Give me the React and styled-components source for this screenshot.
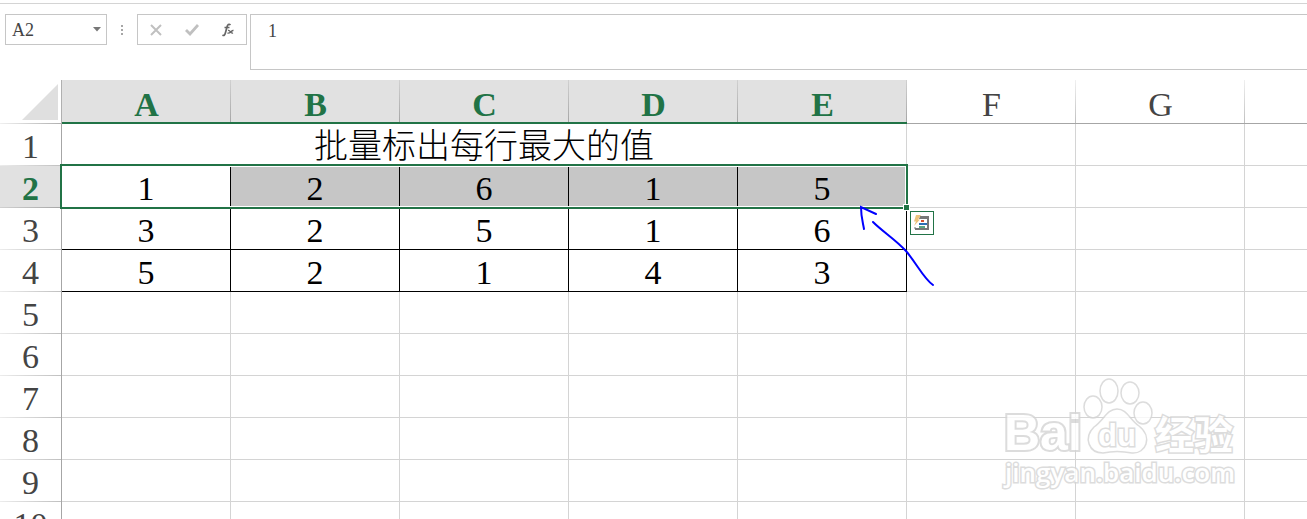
import React, { useState } from "react";
import styled, { createGlobalStyle } from "styled-components";

const GlobalStyle = createGlobalStyle`
  * {
    box-sizing: border-box;
  }
  body {
    margin: 0;
    background: #fff;
    font-family: "Liberation Serif", "Noto Sans CJK SC", serif;
  }
`;

const columns = ["A", "B", "C", "D", "E", "F", "G", "H"];
const rows = [1, 2, 3, 4, 5, 6, 7, 8, 9, 10];
const title = "批量标出每行最大的值";
const data = {
  2: [1, 2, 6, 1, 5],
  3: [3, 2, 5, 1, 6],
  4: [5, 2, 1, 4, 3],
};

const Page = styled.main`
  display: flex;
  flex-direction: column;
  height: 100vh;
  overflow: hidden;
  padding-top: 3px;
`;

const FormulaBar = styled.header`
  display: flex;
  align-items: flex-start;
  flex: none;
  padding: 10px 0 10px 5px;
  border-top: 1px solid #d4d4d4;
`;

const NameBox = styled.div`
  display: flex;
  align-items: center;
  width: 102px;
  height: 31px;
  border: 1px solid #c6c6c6;
`;

const NameInput = styled.input`
  flex: 1;
  min-width: 0;
  padding: 2px 0 0 6px;
  border: none;
  outline: none;
  background: none;
  color: #444;
  font-family: inherit;
  font-size: 18px;
`;

const BarButton = styled.button`
  display: flex;
  align-items: center;
  justify-content: center;
  width: ${({ $width }) => $width}px;
  height: 29px;
  padding: 0;
  border: none;
  background: none;
`;

const Grip = styled.div`
  display: flex;
  flex-direction: column;
  align-items: center;
  justify-content: center;
  gap: 2px;
  width: 30px;
  height: 31px;
`;

const Dot = styled.span`
  width: 2px;
  height: 2px;
  background: #a6a6a6;
`;

const Tools = styled.div`
  display: flex;
  width: 110px;
  height: 31px;
  margin-right: 3px;
  border: 1px solid #c6c6c6;
`;

const FormulaInput = styled.textarea`
  flex: 1;
  height: 56px;
  padding: 4px 17px;
  border: 1px solid #c6c6c6;
  border-right: none;
  outline: none;
  resize: none;
  color: #444;
  font-family: inherit;
  font-size: 18px;
  line-height: 24px;
`;

const Sheet = styled.section`
  position: relative;
  flex: 1;
  min-height: 0;
  overflow: hidden;
`;

const Grid = styled.table`
  table-layout: fixed;
  width: 1414px;
  border-collapse: separate;
  border-spacing: 0;
  font-size: 34px;
  line-height: 36px;
  text-align: center;
`;

const Corner = styled.th`
  width: 62px;
  height: 44px;
  padding: 0;
  border-right: 1px solid #b0b0b0;
  background: linear-gradient(to right, #f0f0f0, #b0b0b0) bottom / 100% 1px no-repeat;
`;

const CornerButton = styled.button`
  display: block;
  width: 36px;
  height: 36px;
  margin-left: 22px;
  padding: 0;
  border: none;
  background: #dfdfdf;
  clip-path: polygon(100% 0, 100% 100%, 0 100%);
`;

const ColumnHead = styled.th`
  height: 44px;
  padding: 8px 0 0;
  border-bottom: ${({ $selected }) => ($selected ? "2px solid #217346" : "1px solid #a6a6a6")};
  background: linear-gradient(to bottom, ${({ $selected }) => ($selected ? "#d0d0d0, #a6a6a6" : "#f0f0f0, #c0c0c0")}) right / 1px 100% no-repeat
    ${({ $selected }) => ($selected ? "#e1e1e1" : "#fff")};
  color: ${({ $selected }) => ($selected ? "#217346" : "#444")};
  font-weight: ${({ $selected }) => ($selected ? "bold" : "normal")};
  line-height: 34px;
  vertical-align: top;
`;

const RowHead = styled.th`
  height: 42px;
  padding: 5px 0 0;
  border-right: 1px solid #a6a6a6;
  background: linear-gradient(to right, ${({ $selected }) => ($selected ? "#d0d0d0, #a6a6a6" : "#ececec, #c0c0c0")}) bottom / 100% 1px no-repeat
    ${({ $selected }) => ($selected ? "#e1e1e1" : "#fff")};
  color: ${({ $selected }) => ($selected ? "#217346" : "#444")};
  font-weight: ${({ $selected }) => ($selected ? "bold" : "normal")};
  vertical-align: top;
`;

const Cell = styled.td`
  height: 42px;
  padding: 5px 0 0;
  border-right: 1px solid ${({ $boxed }) => ($boxed ? "#000" : "#d4d4d4")};
  border-bottom: 1px solid ${({ $boxed }) => ($boxed ? "#000" : "#d4d4d4")};
  background: ${({ $shaded }) => ($shaded ? "#c6c6c6" : "#fff")};
  color: #000;
  vertical-align: top;
`;

const TitleCell = styled(Cell)`
  font-weight: 300;
`;

const Selection = styled.div`
  position: absolute;
  top: 84px;
  left: 60px;
  width: 848px;
  height: 45px;
  border: 2px solid #217346;
  box-shadow: inset 0 0 0 1px #fff;
  pointer-events: none;

  &::after {
    content: "";
    position: absolute;
    right: -4px;
    bottom: -4px;
    width: 5px;
    height: 5px;
    border: 1px solid #fff;
    background: #217346;
  }
`;

const QuickAnalysis = styled.button`
  position: absolute;
  top: 131px;
  left: 910px;
  width: 24px;
  height: 24px;
  padding: 0;
  border: 1px solid #217346;
  background: #fff;

  svg {
    display: block;
  }
`;

const Arrow = styled.svg`
  position: absolute;
  top: 120px;
  left: 850px;
  pointer-events: none;
`;

const Watermark = styled.svg`
  position: absolute;
  top: 295px;
  left: 995px;
  opacity: 0.8;
  pointer-events: none;

  text {
    paint-order: stroke;
  }
`;

const App = () => {
  const [name, setName] = useState("A2");
  const [formula, setFormula] = useState("1");

  return (
    <Page>
      <GlobalStyle />
      <FormulaBar>
        <NameBox>
          <NameInput aria-label="Name box" value={name} onChange={(e) => setName(e.target.value)} />
          <BarButton $width={18} aria-label="Open name list">
            <svg width="8" height="5" viewBox="0 0 8 5">
              <path d="M0 0H8L4 4.500Z" fill="#777" />
            </svg>
          </BarButton>
        </NameBox>
        <Grip>
          <Dot />
          <Dot />
          <Dot />
        </Grip>
        <Tools>
          <BarButton $width={36} aria-label="Cancel">
            <svg width="12" height="12" viewBox="0 0 12 12">
              <path d="M1 1L11 11M11 1L1 11" stroke="#c0c0c0" strokeWidth="2" />
            </svg>
          </BarButton>
          <BarButton $width={36} aria-label="Enter">
            <svg width="14" height="12" viewBox="0 0 14 12">
              <path d="M1 6L5 10L13 1" fill="none" stroke="#c0c0c0" strokeWidth="2.800" />
            </svg>
          </BarButton>
          <BarButton $width={36} aria-label="Insert function">
            <svg width="14" height="14" viewBox="0 0 14 14" fill="none" stroke="#666">
              <path d="M9.500 2C8 0.500 6.500 1.500 6 4L4.500 9.500C4 12 3 13 1.500 12M3.500 4.500H8.500" strokeWidth="1.700" />
              <path d="M7 7.500C9.500 6.500 9 11 12 10M12.500 7.500C10.500 7 9 11 6.500 10" strokeWidth="1.400" />
            </svg>
          </BarButton>
        </Tools>
        <FormulaInput aria-label="Formula" value={formula} onChange={(e) => setFormula(e.target.value)} />
      </FormulaBar>

      <Sheet>
        <Grid>
          <thead>
            <tr>
              <Corner>
                <CornerButton aria-label="Select all" />
              </Corner>
              {columns.map((col, i) => (
                <ColumnHead key={col} $selected={i < 5}>
                  {col}
                </ColumnHead>
              ))}
            </tr>
          </thead>
          <tbody>
            {rows.map((row) => (
              <tr key={row}>
                <RowHead $selected={row === 2}>{row}</RowHead>
                {row === 1 && <TitleCell colSpan={5}>{title}</TitleCell>}
                {columns.slice(row === 1 ? 5 : 0).map((col, i) => (
                  <Cell key={col} $boxed={Boolean(data[row]) && i < 5} $shaded={row === 2 && i > 0 && i < 5}>
                    {data[row]?.[i]}
                  </Cell>
                ))}
              </tr>
            ))}
          </tbody>
        </Grid>

        <Selection />
        <QuickAnalysis aria-label="Quick analysis">
          <svg width="22" height="22" viewBox="0 0 22 22">
            <path d="M9 4H18V18H4V16H16V7H8Z" fill="#777" />
            <path d="M4 15V17" stroke="#777" strokeWidth="1" />
            <path d="M10 9H13" stroke="#d35230" strokeWidth="2" />
            <path d="M8 12H16" stroke="#2b6fb5" strokeWidth="2" />
            <path d="M8 15H14" stroke="#5aa583" strokeWidth="2" />
            <path d="M5 3H10L7 7.500H9L3 14L5 9.500H3Z" fill="#ecc27c" />
          </svg>
        </QuickAnalysis>

        {/* pen mark pointing at the selected row */}
        <Arrow width="90" height="90" viewBox="0 0 90 90" fill="none" stroke="#00f" strokeWidth="2" strokeLinecap="round">
          <path d="M14 29C13 23 11 17 11 7L26 14" />
          <path d="M23 22C33 32 45 39 56 51C67 64 74 79 83 85" />
        </Arrow>

        {/* site watermark */}
        <Watermark width="250" height="120" viewBox="0 0 250 120" fill="#fff" stroke="#d4d4d4" strokeWidth="1.500">
          <ellipse cx="98" cy="32" rx="9" ry="11" />
          <ellipse cx="114" cy="16" rx="9" ry="12" />
          <ellipse cx="135" cy="18" rx="9" ry="11" />
          <ellipse cx="148" cy="38" rx="9" ry="11" />
          <path d="M122 34C132 34 135 45 144 51C158 62 151 79 137 78C127 76 117 76 108 78C94 78 88 63 99 52C109 45 112 34 122 34Z" />
          <text x="9" y="75" fontFamily="Liberation Sans" fontWeight="bold" fontSize="50" strokeWidth="4">
            Bai
          </text>
          <text x="103" y="71" fontFamily="Liberation Sans" fontWeight="bold" fontSize="31" strokeWidth="3">
            du
          </text>
          <text x="160" y="74" fontFamily="Noto Sans CJK SC" fontWeight="bold" fontSize="39" strokeWidth="3">
            经验
          </text>
          <text x="10" y="107" fontFamily="Open Sans" fontWeight="600" fontSize="26" strokeWidth="3">
            jingyan.baidu.com
          </text>
        </Watermark>
      </Sheet>
    </Page>
  );
};

export default App;
